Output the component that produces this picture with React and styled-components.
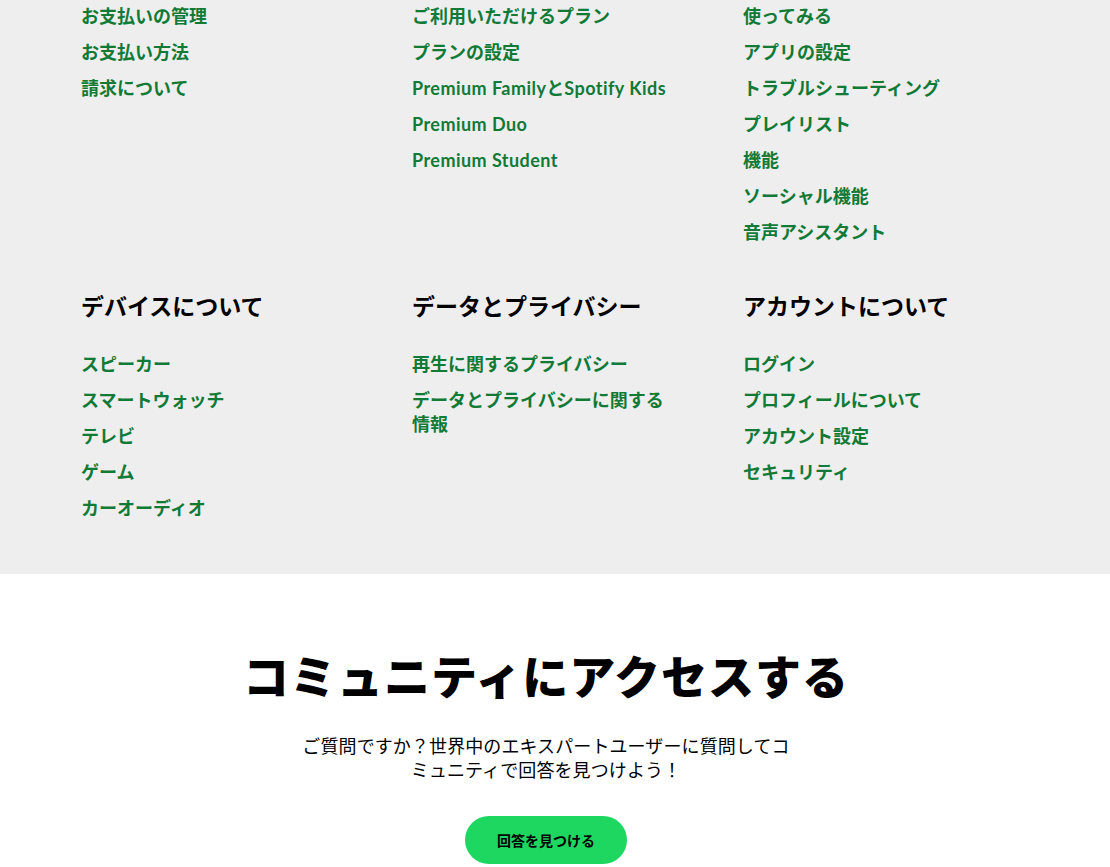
import React from "react";
import styled, { createGlobalStyle } from "styled-components";

const Global = createGlobalStyle`
  html, body { margin: 0; padding: 0; background: #ffffff; }
  body {
    font-family: "Lato", "Noto Sans CJK JP", sans-serif;
    -webkit-font-smoothing: antialiased;
  }
  * { box-sizing: border-box; }
`;

const Topics = styled.section`
  background: #eeeeee;
  padding: 4px 0 54px 81px;
`;

const Grid = styled.div`
  display: grid;
  grid-template-columns: repeat(3, 331px);
  row-gap: 46px;
`;

const Column = styled.div`
  display: flex;
  flex-direction: column;
  padding-right: 64px;
`;

const Heading = styled.h2`
  margin: 0 0 30px;
  font-family: "Lato", "Noto Sans CJK JP", sans-serif;
  font-size: 23px;
  line-height: 32px;
  font-weight: 700;
  color: #000000;
`;

const LinkList = styled.ul`
  list-style: none;
  margin: 0;
  padding: 0;
  display: flex;
  flex-direction: column;
  gap: 12px;
`;

const LinkItem = styled.li`
  margin: 0;
`;

const TopicLink = styled.a`
  font-family: "Lato", "Noto Sans CJK JP", sans-serif;
  font-size: 18px;
  line-height: 24px;
  font-weight: 700;
  color: #117a37;
  text-decoration: none;
  display: block;
`;

const Latin = styled.span`
  letter-spacing: 0.45px;
`;

const Community = styled.section`
  display: flex;
  flex-direction: column;
  align-items: center;
  padding: 75px 18px 3px 0;
  background: #ffffff;
`;

const Title = styled.h1`
  margin: 0 0 29px;
  font-family: "Lato", "Noto Sans CJK JP", sans-serif;
  font-size: 46px;
  line-height: 56px;
  font-weight: 900;
  color: #000000;
  letter-spacing: 1px;
`;

const Lead = styled.p`
  margin: 0 0 34px;
  max-width: 494px;
  text-align: center;
  font-family: "Lato", "Noto Sans CJK JP", sans-serif;
  font-size: 18px;
  line-height: 24px;
  font-weight: 400;
  color: #000000;
  letter-spacing: 0.1px;
`;

const PillButton = styled.a`
  display: inline-flex;
  align-items: center;
  justify-content: center;
  height: 48px;
  padding: 0 32px;
  border-radius: 24px;
  background: #1ed760;
  color: #000000;
  font-family: "Lato", "Noto Sans CJK JP", sans-serif;
  font-size: 14px;
  font-weight: 700;
  text-decoration: none;
`;

const sections = [
  {
    links: ["お支払いの管理", "お支払い方法", "請求について"],
  },
  {
    links: [
      "ご利用いただけるプラン",
      "プランの設定",
      ["Premium Family", "と", "Spotify Kids"],
      ["Premium Duo"],
      ["Premium Student"],
    ],
  },
  {
    links: [
      "使ってみる",
      "アプリの設定",
      "トラブルシューティング",
      "プレイリスト",
      "機能",
      "ソーシャル機能",
      "音声アシスタント",
    ],
  },
  {
    title: "デバイスについて",
    links: ["スピーカー", "スマートウォッチ", "テレビ", "ゲーム", "カーオーディオ"],
  },
  {
    title: "データとプライバシー",
    links: ["再生に関するプライバシー", "データとプライバシーに関する情報"],
  },
  {
    title: "アカウントについて",
    links: ["ログイン", "プロフィールについて", "アカウント設定", "セキュリティ"],
  },
];

function renderLabel(l) {
  if (typeof l === "string") return l;
  return l.map((part, i) =>
    /^[A-Za-z ]+$/.test(part) ? <Latin key={i}>{part}</Latin> : <React.Fragment key={i}>{part}</React.Fragment>
  );
}

export default function App() {
  return (
    <>
      <Global />
      <Topics>
        <Grid>
          {sections.map((s, i) => (
            <Column key={i}>
              {s.title && <Heading>{s.title}</Heading>}
              <LinkList>
                {s.links.map((l, j) => (
                  <LinkItem key={j}>
                    <TopicLink href="#">{renderLabel(l)}</TopicLink>
                  </LinkItem>
                ))}
              </LinkList>
            </Column>
          ))}
        </Grid>
      </Topics>
      <Community>
        <Title>コミュニティにアクセスする</Title>
        <Lead>ご質問ですか？世界中のエキスパートユーザーに質問してコミュニティで回答を見つけよう！</Lead>
        <PillButton href="#">回答を見つける</PillButton>
      </Community>
    </>
  );
}
